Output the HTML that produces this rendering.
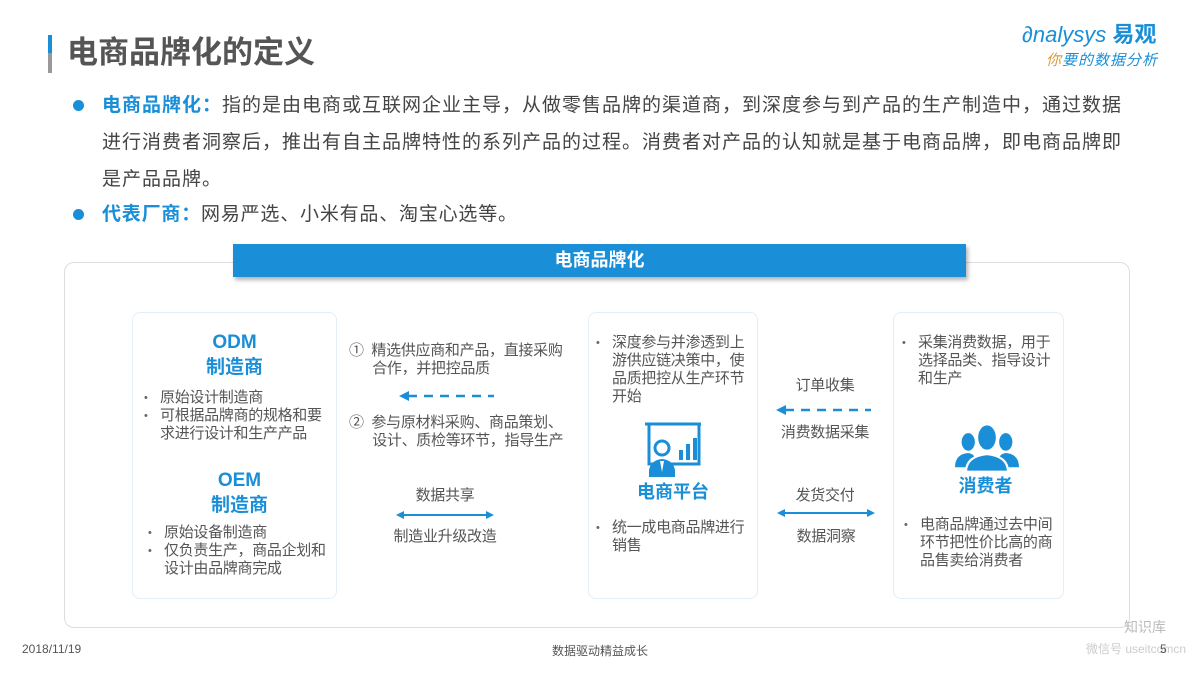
<!DOCTYPE html>
<html><head><meta charset="utf-8"><style>
*{margin:0;padding:0;box-sizing:border-box}
body{width:1200px;height:675px;background:#fff;position:relative;overflow:hidden;font-family:"Liberation Sans","Noto Sans CJK SC",sans-serif;color:#444}
.a{position:absolute;white-space:nowrap}
.blue{color:#1a8fd8}
.box{position:absolute;border:1px solid #e3eef6;border-radius:8px}
.t14{font-size:15px;line-height:18px;color:#555;letter-spacing:-0.3px}
.b{font-weight:bold}
ul{list-style:none}
li{position:relative;padding-left:22px}
li:before{content:"•";position:absolute;left:6px;color:#666;font-size:11px}
</style></head><body>
<div class="a" style="left:48px;top:35px;width:4px;height:18px;background:#1a8fd8"></div>
<div class="a" style="left:48px;top:53px;width:4px;height:20px;background:#999"></div>
<div class="a b" style="left:67px;top:33px;font-size:31px;color:#555;line-height:40px">电商品牌化的定义</div>

<div class="a" style="left:1022px;top:22px;font-size:22px;color:#1a8fd8;font-style:italic;line-height:26px">∂nalysys <b style="font-style:normal">易观</b></div>
<div class="a" style="left:1046px;top:52px;font-size:15px;color:#1a8fd8;font-style:italic;letter-spacing:1px;line-height:18px"><span style="color:#d99a40">你</span>要的数据分析</div>

<div class="a" style="left:73px;top:100px;width:11px;height:11px;border-radius:50%;background:#1a8fd8"></div>
<div class="a" style="left:102px;top:87px;font-size:19px;letter-spacing:1px;line-height:37px;color:#444"><b class="blue">电商品牌化：</b>指的是由电商或互联网企业主导，从做零售品牌的渠道商，到深度参与到产品的生产制造中，通过数据<br>进行消费者洞察后，推出有自主品牌特性的系列产品的过程。消费者对产品的认知就是基于电商品牌，即电商品牌即<br>是产品品牌。</div>
<div class="a" style="left:73px;top:209px;width:11px;height:11px;border-radius:50%;background:#1a8fd8"></div>
<div class="a" style="left:102px;top:196px;font-size:19px;letter-spacing:0.8px;line-height:37px"><b class="blue">代表厂商：</b>网易严选、小米有品、淘宝心选等。</div>

<div class="a" style="left:64px;top:262px;width:1066px;height:366px;border:1px solid #ddd;border-radius:10px"></div>
<div class="a b" style="left:233px;top:244px;width:733px;height:33px;background:#1a8fd8;color:#fff;font-size:18px;line-height:33px;text-align:center;box-shadow:2px 3px 4px rgba(0,0,0,.3)">电商品牌化</div>

<div class="box" style="left:132px;top:312px;width:205px;height:287px"></div>
<div class="a b blue" style="left:132px;top:330px;width:205px;text-align:center;font-size:19px;line-height:25px">ODM<br>制造商</div>
<ul class="a t14" style="left:138px;top:389px"><li>原始设计制造商</li><li>可根据品牌商的规格和要<br>求进行设计和生产产品</li></ul>
<div class="a b blue" style="left:137px;top:468px;width:205px;text-align:center;font-size:19px;line-height:25px">OEM<br>制造商</div>
<ul class="a t14" style="left:142px;top:524px"><li>原始设备制造商</li><li>仅负责生产，商品企划和<br>设计由品牌商完成</li></ul>

<div class="a t14" style="left:349px;top:342px">①&nbsp; 精选供应商和产品，直接采购<br>&nbsp;&nbsp;&nbsp;&nbsp;&nbsp;&nbsp;合作，并把控品质</div>
<svg class="a" style="left:398px;top:390px" width="100" height="12"><path d="M10 6H96" stroke="#1a8fd8" stroke-width="2.5" stroke-dasharray="9 7"/><path d="M1 6L11 1V11Z" fill="#1a8fd8"/></svg>
<div class="a t14" style="left:349px;top:414px">②&nbsp; 参与原材料采购、商品策划、<br>&nbsp;&nbsp;&nbsp;&nbsp;&nbsp;&nbsp;设计、质检等环节，指导生产</div>
<div class="a t14" style="left:395px;top:487px;width:100px;text-align:center">数据共享</div>
<svg class="a" style="left:395px;top:509px" width="100" height="12"><path d="M6 6H94" stroke="#1a8fd8" stroke-width="2"/><path d="M1 6L9 2V10ZM99 6L91 2V10Z" fill="#1a8fd8"/></svg>
<div class="a t14" style="left:385px;top:528px;width:120px;text-align:center">制造业升级改造</div>

<div class="box" style="left:588px;top:312px;width:170px;height:287px"></div>
<ul class="a t14" style="left:590px;top:334px"><li>深度参与并渗透到上<br>游供应链决策中，使<br>品质把控从生产环节<br>开始</li></ul>
<svg class="a" style="left:643px;top:420px" width="60" height="58" viewBox="0 0 60 58"><path d="M2 4H58M6 4V44H56V4" stroke="#1a8fd8" stroke-width="3" fill="none"/><rect x="36" y="30" width="4" height="10" fill="#1a8fd8"/><rect x="43" y="24" width="4" height="16" fill="#1a8fd8"/><rect x="50" y="18" width="4" height="22" fill="#1a8fd8"/><circle cx="19" cy="28" r="7" fill="#fff" stroke="#1a8fd8" stroke-width="3"/><path d="M6 57V50Q8 40 19 39Q30 40 32 50V57Z" fill="#1a8fd8"/><path d="M17 41L19 52L21 41Z" fill="#fff"/></svg>
<div class="a b blue" style="left:588px;top:480px;width:170px;text-align:center;font-size:18px;line-height:24px">电商平台</div>
<ul class="a t14" style="left:590px;top:519px"><li>统一成电商品牌进行<br>销售</li></ul>

<div class="a t14" style="left:775px;top:377px;width:100px;text-align:center">订单收集</div>
<svg class="a" style="left:775px;top:404px" width="100" height="12"><path d="M10 6H96" stroke="#1a8fd8" stroke-width="2.5" stroke-dasharray="9 7"/><path d="M1 6L11 1V11Z" fill="#1a8fd8"/></svg>
<div class="a t14" style="left:765px;top:424px;width:120px;text-align:center">消费数据采集</div>
<div class="a t14" style="left:775px;top:487px;width:100px;text-align:center">发货交付</div>
<svg class="a" style="left:776px;top:507px" width="100" height="12"><path d="M6 6H94" stroke="#1a8fd8" stroke-width="2"/><path d="M1 6L9 2V10ZM99 6L91 2V10Z" fill="#1a8fd8"/></svg>
<div class="a t14" style="left:776px;top:528px;width:100px;text-align:center">数据洞察</div>

<div class="box" style="left:893px;top:312px;width:171px;height:287px"></div>
<ul class="a t14" style="left:896px;top:334px"><li>采集消费数据，用于<br>选择品类、指导设计<br>和生产</li></ul>
<svg class="a" style="left:955px;top:423px" width="64" height="50" viewBox="0 0 58 45"><g fill="#1a8fd8"><ellipse cx="12" cy="17" rx="6" ry="8"/><path d="M0 40Q0 28 12 27Q20 28 20 40Z"/><ellipse cx="46" cy="17" rx="6" ry="8"/><path d="M38 40Q38 28 46 27Q58 28 58 40Z"/></g><g fill="#1a8fd8" stroke="#fff" stroke-width="2"><ellipse cx="29" cy="13" rx="9" ry="12"/><path d="M10 44Q10 30 29 28Q48 30 48 44Z"/></g></svg>
<div class="a b blue" style="left:893px;top:474px;width:185px;text-align:center;font-size:18px;line-height:24px">消费者</div>
<ul class="a t14" style="left:898px;top:516px"><li>电商品牌通过去中间<br>环节把性价比高的商<br>品售卖给消费者</li></ul>

<div class="a" style="left:22px;top:642px;font-size:12px;color:#555">2018/11/19</div>
<div class="a" style="left:500px;top:642px;width:200px;text-align:center;font-size:12px;color:#555">数据驱动精益成长</div>
<div class="a" style="left:1124px;top:617px;font-size:14px;color:#bbb">知识库</div>
<div class="a" style="left:1086px;top:640px;font-size:12px;color:#ccc">微信号 useitcomcn</div>
<div class="a" style="left:1160px;top:642px;font-size:12px;color:#555">5</div>
</body></html>
